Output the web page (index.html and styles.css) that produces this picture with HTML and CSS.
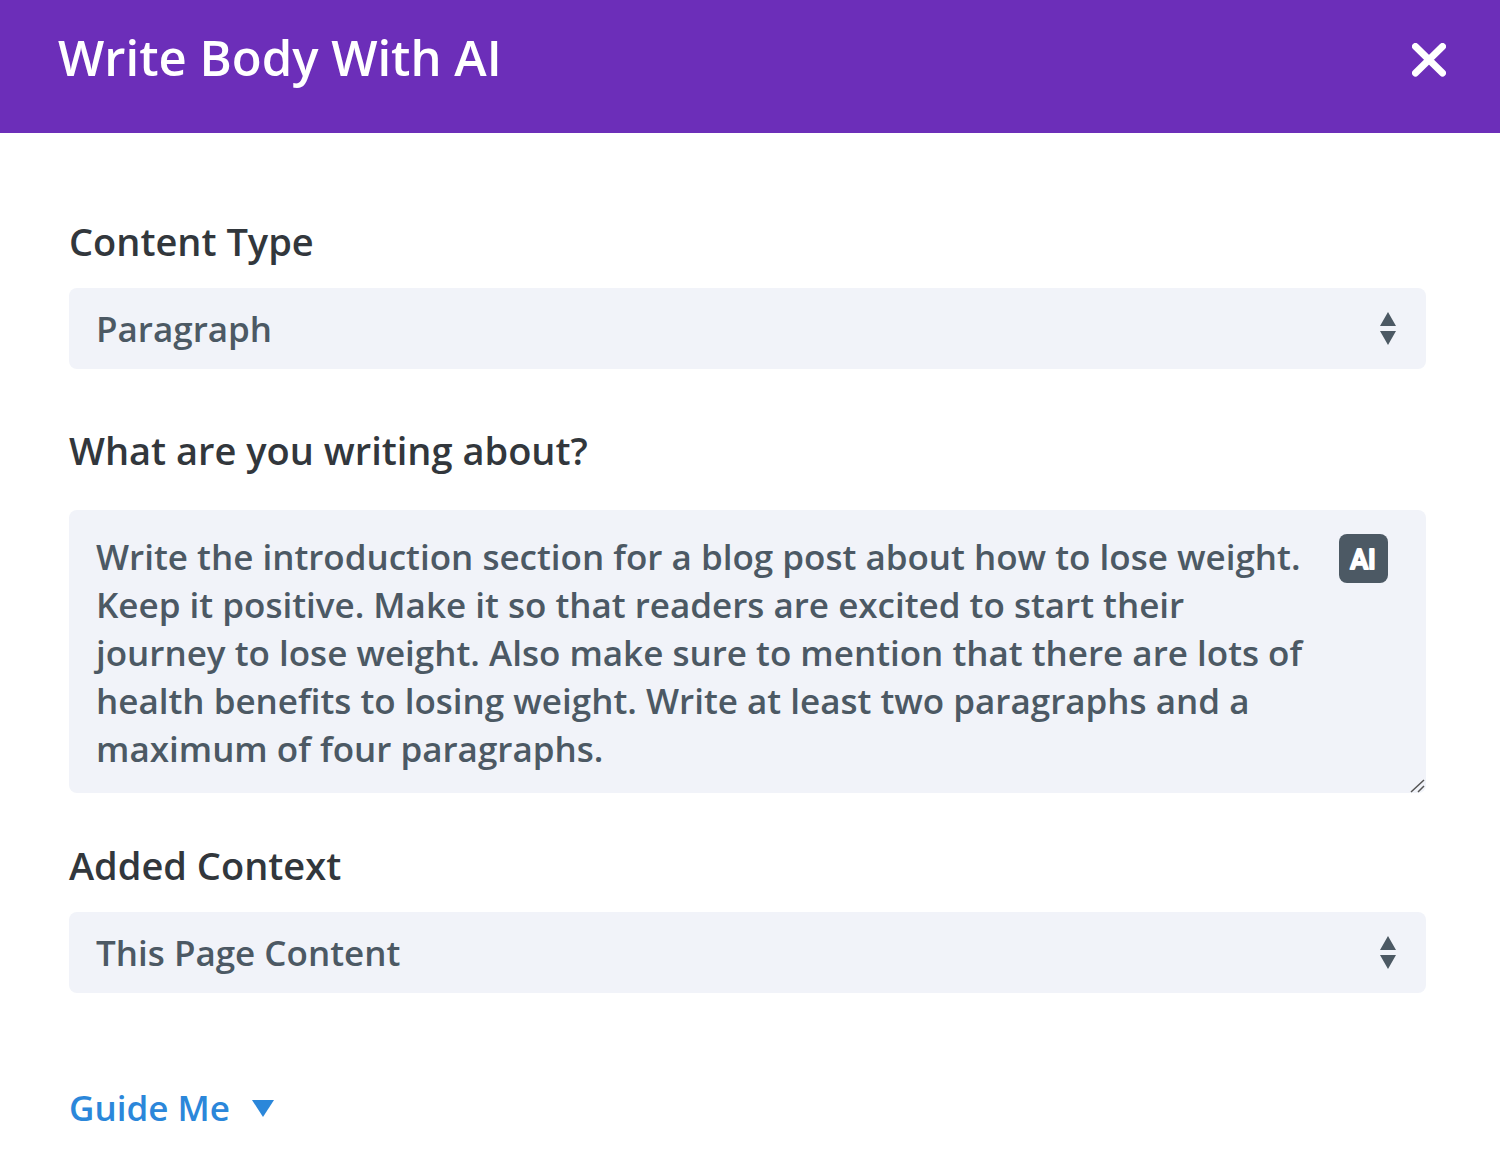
FILE: index.html
```html
<!DOCTYPE html>
<html lang="en">
<head>
    <meta charset="UTF-8">
    <meta name="viewport" content="width=device-width, initial-scale=1.0">
    <title>Write Body With AI</title>
    <link rel="stylesheet" href="styles.css">
</head>
<body>
    <header class="modal-header">
        <h1>Write Body With AI</h1>
        <button type="button" class="close-btn" aria-label="Close">
            <svg viewBox="0 0 34 34" width="34" height="34">
                <path d="M3.5 3.5 L30.5 30 M30.5 3.5 L3.5 30" />
            </svg>
        </button>
    </header>
    <form class="modal-body">
        <div class="field">
            <label for="contentType">Content Type</label>
            <div class="select-wrap">
                <select id="contentType">
                    <option>Paragraph</option>
                </select>
                <svg class="select-arrows" viewBox="0 0 16 32" width="16" height="32">
                    <path d="M8 -1 L16 13 H0 Z M0 18 H16 L8 32 Z" />
                </svg>
            </div>
        </div>

        <div class="field field-prompt">
            <label for="prompt">What are you writing about?</label>
            <div class="prompt-wrap">
                <textarea id="prompt" rows="5" spellcheck="false">Write the introduction section for a blog post about how to lose weight. Keep it positive. Make it so that readers are excited to start their journey to lose weight. Also make sure to mention that there are lots of health benefits to losing weight. Write at least two paragraphs and a maximum of four paragraphs.</textarea>
                <button type="button" class="ai-btn">
                    <svg viewBox="0 0 49 49" width="49" height="49">
                        <text x="24" y="35" text-anchor="middle">AI</text>
                    </svg>
                </button>
                <svg class="resize-grip" viewBox="0 0 15 15" width="15" height="15">
                    <path d="M1 14 L14 2 M8 14 L14 8" />
                </svg>
            </div>
        </div>

        <div class="field">
            <label for="context">Added Context</label>
            <div class="select-wrap">
                <select id="context">
                    <option>This Page Content</option>
                </select>
                <svg class="select-arrows" viewBox="0 0 16 32" width="16" height="32">
                    <path d="M8 -1 L16 13 H0 Z M0 18 H16 L8 32 Z" />
                </svg>
            </div>
        </div>

        <button type="button" class="guide-btn">
            Guide Me
            <svg viewBox="0 0 22 17" width="22" height="17">
                <path d="M0 0 H22 L11 17 Z" />
            </svg>
        </button>
    </form>
</body>
</html>
```
FILE: styles.css
```css
:root {
    --header-bg: #6c2eb9;
    --field-bg: #f1f3f9;
    --label-color: #32373c;
    --text-color: #4c5964;
    --link-color: #2b87da;
}

* {
    box-sizing: border-box;
}

body {
    margin: 0;
    background-color: #fff;
    font-family: 'Open Sans', sans-serif;
    font-weight: 600;
}

button, select, textarea {
    font-family: inherit;
    font-weight: inherit;
    border: none;
}

button {
    padding: 0;
    background: none;
    cursor: pointer;
}

.modal-header {
    display: flex;
    justify-content: space-between;
    align-items: flex-start;
    padding: 23px 54px 42px 58px;
    background-color: var(--header-bg);
}

.modal-header h1 {
    margin: 0;
    font-size: 49px;
    font-weight: 600;
    line-height: 68px;
    color: #fff;
}

.close-btn {
    display: flex;
    padding-top: 20px;
}

.close-btn svg {
    fill: none;
    stroke: #fff;
    stroke-width: 7;
    stroke-linecap: round;
}

.modal-body {
    display: flex;
    flex-direction: column;
    align-items: stretch;
    padding: 82px 74px 20px 69px;
}

.field {
    margin-bottom: 55px;
}

.field label {
    display: block;
    margin-bottom: 21px;
    font-size: 38px;
    line-height: 52px;
    color: var(--label-color);
}

.select-wrap, .prompt-wrap {
    position: relative;
}

.field select {
    display: block;
    width: 100%;
    height: 81px;
    padding: 0 80px 0 27px;
    font-size: 35px;
    border-radius: 8px;
    background-color: var(--field-bg);
    color: var(--text-color);
    appearance: none;
}

.select-arrows {
    position: absolute;
    top: 25px;
    right: 30px;
    fill: var(--text-color);
    overflow: visible;
    pointer-events: none;
}

.field-prompt {
    margin-bottom: 46px;
}

.field-prompt label {
    margin-bottom: 34px;
}

.field textarea {
    display: block;
    width: 100%;
    padding: 23px 110px 20px 27px;
    font-size: 35px;
    line-height: 48px;
    border-radius: 8px;
    background-color: var(--field-bg);
    color: var(--text-color);
    overflow: hidden;
    resize: vertical;
}

.field textarea::-webkit-resizer {
    background: transparent;
}

.resize-grip {
    position: absolute;
    right: 1px;
    bottom: 0;
    fill: none;
    stroke: #555;
    stroke-width: 1.5;
    pointer-events: none;
}

.ai-btn {
    position: absolute;
    top: 24px;
    right: 38px;
    display: flex;
    border-radius: 8px;
    background-color: var(--text-color);
}

.ai-btn text {
    font-family: Roboto, sans-serif;
    font-size: 27px;
    font-weight: 500;
    fill: #fff;
    stroke: #fff;
    stroke-width: 2;
    stroke-linejoin: round;
}

.guide-btn {
    display: flex;
    align-self: flex-start;
    align-items: center;
    gap: 22px;
    margin-top: 34px;
    font-size: 35px;
    line-height: 52px;
    color: var(--link-color);
}

.guide-btn svg {
    fill: currentColor;
}
```
